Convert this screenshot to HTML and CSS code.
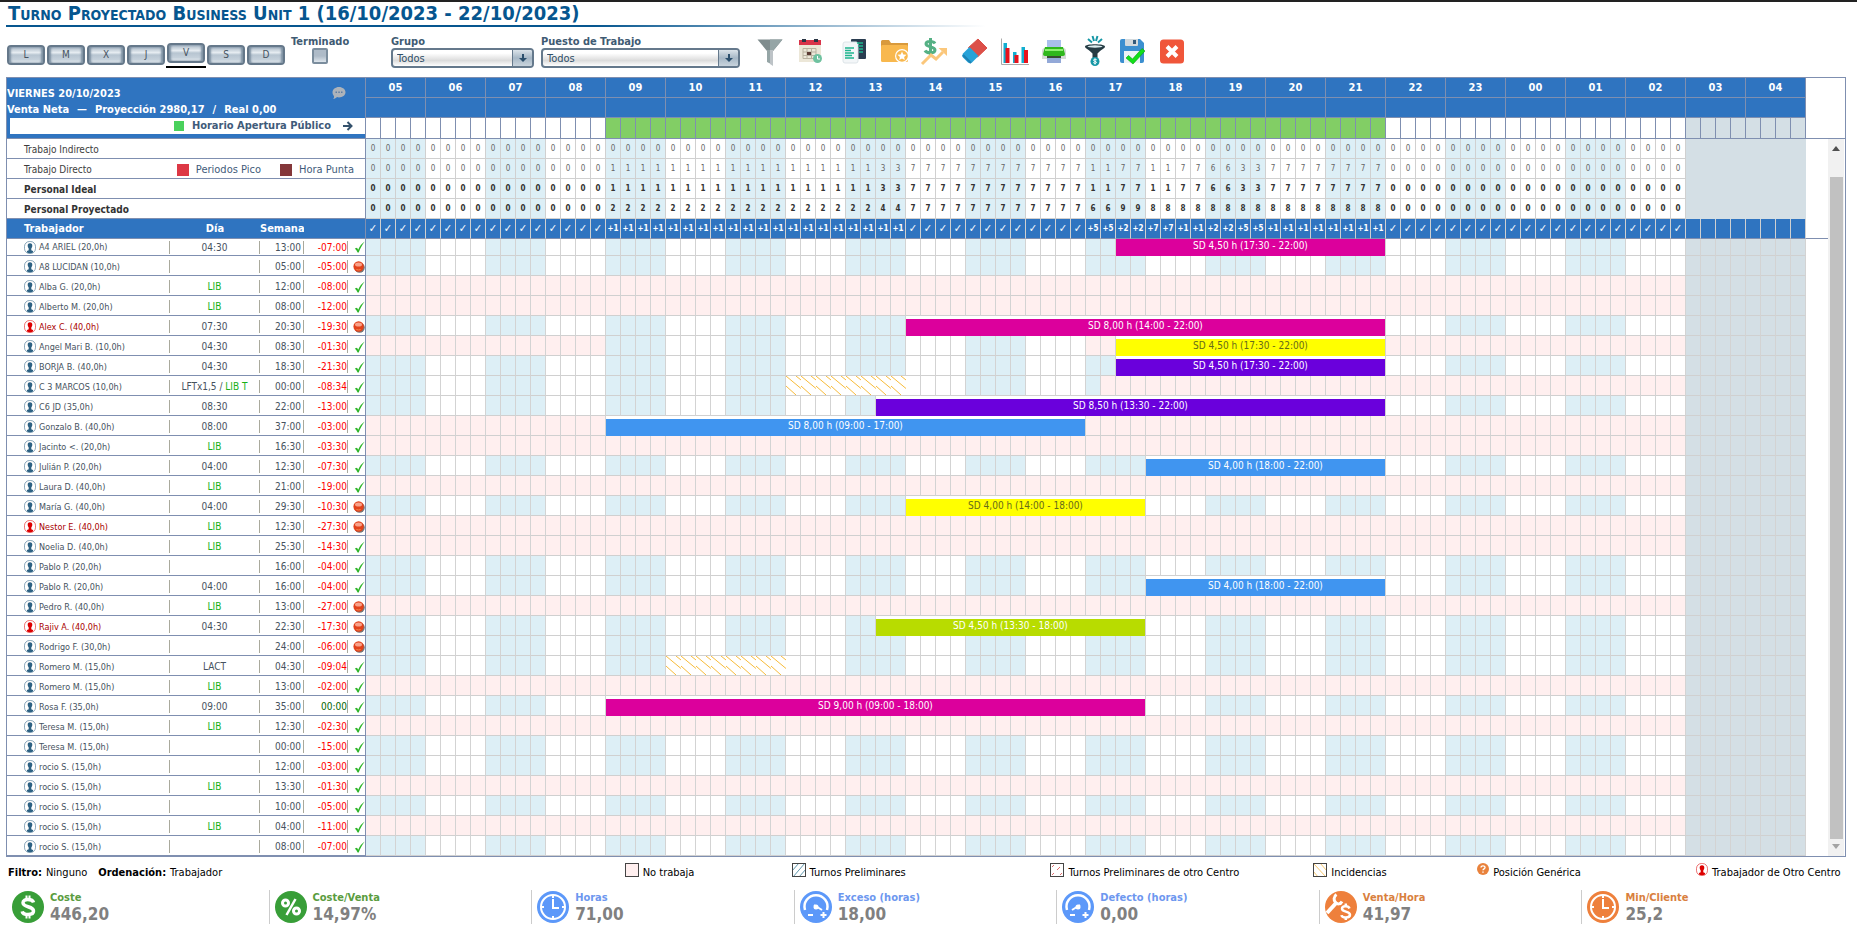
FILE: index.html
```html
<!DOCTYPE html>
<html lang="es">
<head>
<meta charset="utf-8">
<title>Turno Proyectado Business Unit 1</title>
<link rel="stylesheet" href="styles.css">
</head>
<body>
<svg class="defs" aria-hidden="true">
  <symbol id="person" viewBox="0 0 12 13"><rect x=".5" y=".5" width="11" height="12" rx="5" fill="#fff" stroke="currentColor" stroke-opacity=".55"/><path d="M6 2.200c1.700 0 2.400 1.100 2.300 2.700-.1 1.300-.7 2-1 2.600v1.700l1.700.9v1.400c-1.600 1.100-4.400 1.100-6 0v-1.400l1.700-.9V7.500c-.3-.6-.9-1.300-1-2.600C3.600 3.300 4.300 2.200 6 2.200z" fill="currentColor"/></symbol>
  <symbol id="tick" viewBox="0 0 11 12"><path d="M.8 7.500 3 6.800l1.200 2C5.600 5.500 7.700 2.600 10.700.6 8.300 4 6.200 7.500 4.700 11.500H3.600C2.900 9.900 2 8.500.8 7.500z" fill="#2fb52a"/></symbol>
  <symbol id="ball" viewBox="0 0 12 12"><circle cx="6.600" cy="6.600" r="5.200" fill="#777"/><circle cx="5.600" cy="5.500" r="5.200" fill="#e2421b"/><ellipse cx="5.500" cy="3.500" rx="3.500" ry="2" fill="#f9a28a"/><path d="M3 8c1.500 1 3.500 1 5 0-.5 1.800-4.500 1.800-5 0z" fill="#fdb26a"/></symbol>
  <symbol id="arrow" viewBox="0 0 10 10"><path d="M4 1h2v4h3L5 9 1 5h3z" fill="#2b4f6d"/></symbol>
</svg>

<h1 class="title">Turno Proyectado Business Unit 1 (16/10/2023 - 22/10/2023)</h1>

<div class="toolbar">
  <div class="days">
    <div class="day"><button type="button">L</button></div>
    <div class="day"><button type="button">M</button></div>
    <div class="day"><button type="button">X</button></div>
    <div class="day"><button type="button">J</button></div>
    <div class="day day-on"><button type="button">V</button></div>
    <div class="day"><button type="button">S</button></div>
    <div class="day"><button type="button">D</button></div>
  </div>
  <div class="field field-done">
    <label for="done">Terminado</label>
    <input class="check" type="checkbox" id="done">
  </div>
  <div class="field field-group">
    <label for="group">Grupo</label>
    <div class="combo"><select id="group"><option>Todos</option></select><span class="combo-arrow"><svg width="10" height="10"><use href="#arrow"/></svg></span></div>
  </div>
  <div class="field field-post">
    <label for="post">Puesto de Trabajo</label>
    <div class="combo"><select id="post"><option>Todos</option></select><span class="combo-arrow"><svg width="10" height="10"><use href="#arrow"/></svg></span></div>
  </div>
  <div class="tools">
    <button type="button" aria-label="Filtrar"><svg viewBox="0 0 28 28"><path d="M1.500 1.500h25L17 13H11z" fill="#7f8c8d"/><path d="M14 1.500h12.500L17 13h-3z" fill="#95a5a6"/><path d="M11 12h3v13.500l-3-1.500z" fill="#95a5a6"/><path d="M14 12h3v16l-3-2z" fill="#bdc3c7"/></svg></button>
    <button type="button" aria-label="Calendario"><svg viewBox="0 0 28 28"><path d="M3 7h22v17H3z" fill="#ece7d8"/><path d="M3 2h22v5H3z" fill="#d9344a"/><path d="M6 1h4v3H6zM18 1h4v3h-4z" fill="#2b3645"/><g fill="none" stroke="#b9b2a0"><path d="M7 10.500h13v10H7zM7 14h13M7 17.500h13M11 10.500v10M15.500 10.500v10"/></g><path d="M11 14h4v3h-4z" fill="#5b3a33"/><circle cx="21.500" cy="20.500" r="4.500" fill="#6fc2a0"/><path d="M21.500 18v3h2.500" stroke="#fff" fill="none"/></svg></button>
    <button type="button" aria-label="Copiar"><svg viewBox="-4 0 28 28"><rect x="11" y="1" width="15" height="20" rx="1" fill="#2a3d50"/><rect x="3" y="4" width="15" height="21" rx="2" fill="#f3f6f8" stroke="#dde4e8"/><g stroke="#1fb58f" stroke-width="1.500"><path d="M5 10h9M5 12.500h6M5 15h9M5 17.500h7M5 20h9M17 5h6M18 8h5M19 11h4M19 14h4"/></g></svg></button>
    <button type="button" aria-label="Favoritos"><svg viewBox="-5 0 28 28"><path d="M0 3.500q0-1.500 1.500-1.500H8l2 3h17v6H0z" fill="#d99a3c"/><rect y="7" width="27" height="17" rx="1.500" fill="#f8b84e"/><circle cx="21" cy="18" r="7" fill="#fff"/><circle cx="21" cy="18" r="5.800" fill="#f8b84e"/><path d="m21 13.500 1.300 2.900 3.200.3-2.400 2.200.7 3.100-2.800-1.600-2.800 1.600.7-3.100-2.400-2.200 3.200-.3z" fill="#fff"/></svg></button>
    <button type="button" aria-label="Ventas"><svg viewBox="-4 0 28 28"><path d="M15 5.500C13.500 3 6 2.800 6 6s9 2.300 9 6-8.500 3.500-10 .5M10.500 0v17" fill="none" stroke="#54b084" stroke-width="3"/><path d="m2 26 9-9 5 4 7-7" fill="none" stroke="#fbc77b" stroke-width="3"/><path d="M18.500 10H27v8z" fill="#fbc77b"/></svg></button>
    <button type="button" aria-label="Borrar"><svg viewBox="-5 0 28 28"><path d="m17 1 9 9-9.500 9-9-9.500z" fill="#dc4f48" stroke="#dc4f48" stroke-linejoin="round"/><path d="m8.500 9 9 9-6.500 6.500q-2 1.500-4 0l-5-5q-1.500-2 0-4z" fill="#27a2d8"/><path d="m2 17 8 8" stroke="#1c82b4" stroke-width="2"/></svg></button>
    <button type="button" aria-label="Gráfico"><svg viewBox="-5 0 28 28"><path d="M.5.500v26H28" fill="none" stroke="#aaa"/><path d="M2.500 5h3.500v20H2.500zM12 14h3.500v11H12zM20.500 9H24v16h-3.500z" fill="#12aed0"/><path d="M4.500 10h4v15h-4zM13.500 17h4v8h-4zM23 12h4v13h-4z" fill="#e8121c"/></svg></button>
    <button type="button" aria-label="Imprimir"><svg viewBox="-4 0 28 28"><path d="M7 2h14v10H7z" fill="#a9bfec"/><path d="M5 10h18q3 0 3 3v8H2v-8q0-3 3-3z" fill="#d5dad5"/><path d="M5 9h18l2 7q0 2-2 2H5q-2 0-2-2z" fill="#2fb81c"/><path d="M5 11h18v2H5z" fill="#8cf070"/><path d="M7 19h14v6H7z" fill="#93a9d8"/><path d="M7 18h14v2H7z" fill="#385031"/></svg></button>
    <button type="button" aria-label="Embudo de ventas"><svg viewBox="-5 0 28 28"><path d="M4 8.500C4 5.500 24 5.500 24 8.500c0 2-4 3-7.500 7V20h-5v-4.500C8 11.500 4 10.500 4 8.500z" fill="#253b43"/><ellipse cx="14" cy="8.500" rx="7.500" ry="1.200" fill="#dceef0"/><path d="m7 1 4 3.500M11.500-2l1.500 5M16.500-2 15 3M21 1l-4 3.500" stroke="#1697a6" stroke-width="2"/><circle cx="14" cy="23.500" r="4.500" fill="#1697a6"/><path d="M15.800 22c-1-1.300-3.600-.8-3.300.4.300 1 3 .7 3 2 0 1.200-2.500 1.200-3.300.1M14 20.500v6" fill="none" stroke="#fff"/></svg></button>
    <button type="button" aria-label="Guardar"><svg viewBox="-2 0 28 28"><path d="M2 3q0-2 2-2h18l4 4v18q0 2-2 2H4q-2 0-2-2z" fill="#3b8fd0"/><path d="M7 1h13v6q0 1-1 1H8q-1 0-1-1z" fill="#d2d9dd"/><path d="M15 2h3v4h-3z" fill="#33597a"/><path d="M6 13h16v12H6z" fill="#edf3f6"/><path d="m8 20 2.500-2.500 4 3.500L24 10.500l3 2.500L15 26z" fill="#12e01a" stroke="#0b9a12" stroke-width=".6"/></svg></button>
    <button type="button" aria-label="Cerrar"><svg viewBox="-2 0 28 28"><rect x="2" y="1.500" width="24" height="24" rx="3.500" fill="#f0563a"/><path d="m9 8.500 10 10M19 8.500l-10 10" stroke="#fff" stroke-width="4"/></svg></button>
  </div>
</div>

<main class="board">
  <table class="plan">
    <colgroup><col class="c-name"><col class="c-day"><col class="c-week"><col class="c-week"><col class="c-state"><col span="96"></colgroup>
    <thead id="head">
      <tr class="hours">
        <th class="summary" colspan="5" rowspan="3">
          <div class="summary-box">
            <div class="summary-day"><span>VIERNES 20/10/2023</span>
              <svg width="14" height="14" viewBox="0 0 14 14"><path d="M7 1c3.600 0 6.500 2.300 6.500 5.200S10.600 11.400 7 11.400c-.7 0-1.400-.1-2-.3-1 1-2 1.900-4 1.900.9-.9 1.200-1.700 1-2.800A5 5 0 0 1 .5 6.200C.5 3.300 3.400 1 7 1z" fill="#adb3ba"/><path d="M3.500 5.500h1.500v1.500H3.500zM6.300 5.500h1.500v1.500H6.300zM9 5.500h1.500v1.500H9z" fill="#5f7ea3"/></svg></div>
            <div class="summary-net"><span>Venta Neta</span><span>—</span><span>Proyección 2980,17</span><span>/</span><span>Real 0,00</span></div>
            <div class="summary-open"><i class="chip chip-open"></i>Horario Apertura Público
              <svg width="10" height="12" viewBox="0 0 10 12"><path d="M0 6h8M4.500 2l4 4-4 4" fill="none" stroke="#34516c" stroke-width="2"/></svg></div>
          </div>
        </th>
      </tr>
      <tr class="hours" id="subhours"></tr>
      <tr class="opening" id="opening"></tr>
    </thead>
    <tbody id="body"></tbody>
  </table>
  <div class="rail">
    <div class="rail-head"></div>
    <div class="rail-body">
      <div class="rail-gap"></div>
      <div class="scroll"><i class="up"></i><div class="thumb"></div><i class="down"></i></div>
    </div>
  </div>
</main>

<div class="legend">
  <div class="filter"><b>Filtro:</b> Ninguno <b class="order">Ordenación:</b> Trabajador</div>
  <div><i class="box box-off"></i>No trabaja</div>
  <div><svg class="box" viewBox="0 0 12 12"><path d="M-1 7 6-1M0 13 12-1M6 13l7-8" stroke="#5f97ad" fill="none"/></svg>Turnos Preliminares</div>
  <div><svg class="box" viewBox="0 0 12 12"><path d="M1 3l2-2M6 6l3-3M1 11l2-2M9 11l2-2" stroke="#e26a6a" fill="none"/></svg>Turnos Preliminares de otro Centro</div>
  <div><svg class="box" viewBox="0 0 12 12"><path d="M0 0 12 13M6-1l7 8M-1 7l6 7" stroke="#f6c66b" fill="none"/></svg>Incidencias</div>
  <div class="generic"><svg width="12" height="12" viewBox="0 0 12 12"><circle cx="6" cy="6" r="6" fill="#e9823c"/><path d="M4 4.600C4 2.300 8 2.300 8 4.500 8 6 6 5.800 6 7.300M6 8.400v1.400" fill="none" stroke="#fff" stroke-width="1.400"/></svg>Posición Genérica</div>
  <div class="other"><svg width="12" height="13"><use href="#person"/></svg>Trabajador de Otro Centro</div>
</div>

<div class="kpis">
  <div class="kpi green"><svg viewBox="0 0 32 32"><circle cx="16" cy="16" r="16"/><path d="M21.500 11.500C20.500 7.800 11 7.300 11 11.700c0 5 10.500 3 10.500 8.300 0 4.700-10.500 4.400-11.300.3" stroke-width="3.500" class="ln"/><path d="M14.500 4.500V9M17.500 4.500V9M14.500 23v4.500M17.500 23v4.500" stroke-width="2" class="ln"/></svg><div><span>Coste</span><b>446,20</b></div></div>
  <div class="kpi green"><svg viewBox="0 0 32 32"><circle cx="16" cy="16" r="16"/><circle cx="10.500" cy="12" r="3" stroke-width="3" class="ln"/><circle cx="21.500" cy="20" r="3" stroke-width="3" class="ln"/><path d="M20.500 8 11.500 24" stroke-width="2.500" class="ln"/></svg><div><span>Coste/Venta</span><b>14,97%</b></div></div>
  <div class="kpi blue"><svg viewBox="0 0 32 32"><circle cx="16" cy="16" r="16"/><circle cx="16" cy="16" r="12" stroke-width="2" class="ln"/><path d="M16 8v9h6M16 4v3M16 25v3M4 16h3M25 16h3" stroke-width="2" class="ln"/></svg><div><span>Horas</span><b>71,00</b></div></div>
  <div class="kpi blue"><svg viewBox="0 0 32 32"><circle cx="16" cy="16" r="16"/><path d="M5 19a11.500 11.500 0 1 1 22 0" stroke-width="2.500" class="ln"/><path d="m14 14 8 5M8 24h5M20.500 24h6M23.500 21v6" stroke-width="2" class="ln"/><circle cx="16" cy="16" r="2.500" fill="#fff"/></svg><div><span>Exceso (horas)</span><b>18,00</b></div></div>
  <div class="kpi blue"><svg viewBox="0 0 32 32"><circle cx="16" cy="16" r="16"/><path d="M5 19a11.500 11.500 0 1 1 22 0" stroke-width="2.500" class="ln"/><path d="m18 14-8 5M8 24h5M20.500 24h6M23.500 21v6" stroke-width="2" class="ln"/><circle cx="16" cy="16" r="2.500" fill="#fff"/></svg><div><span>Defecto (horas)</span><b>0,00</b></div></div>
  <div class="kpi orange"><svg viewBox="0 0 32 32"><circle cx="16" cy="16" r="16"/><path d="M2 22 12 11" stroke-width="4" class="ln"/><path d="M11.500 3.500c-3 2-3 6-1 8s5 2 6.500-1" stroke-width="3" class="ln"/><path d="M24.500 17.500c-1-3-7.500-3-7.500.3 0 3.700 8 2 8 6 0 3.500-8 3.500-8.500.3" stroke-width="2.500" class="ln"/><path d="M20.800 12.500v3M20.800 26v3" stroke-width="2.500" class="ln"/></svg><div><span>Venta/Hora</span><b>41,97</b></div></div>
  <div class="kpi orange"><svg viewBox="0 0 32 32"><circle cx="16" cy="16" r="16"/><circle cx="16" cy="16" r="12" stroke-width="2" class="ln"/><path d="M16 8v9h6M16 4v3M16 25v3M4 16h3M25 16h3" stroke-width="2" class="ln"/></svg><div><span>Min/Cliente</span><b>25,2</b></div></div>
</div>
<script src="plan.js"></script>
</body>
</html>
```

FILE: styles.css
```css
* { box-sizing: border-box; }
body {
  margin: 0;
  padding: 0 11px 0 6px;
  border-top: 2px solid #222;
  background: #fff;
  color: #3f5b73;
  font-family: "DejaVu Sans Condensed", "DejaVu Sans", Verdana, sans-serif;
  font-size: 10px;
}
.defs { position: absolute; width: 0; height: 0; }
button { font: inherit; padding: 0; border: 0; background: none; }

.title {
  margin: 0;
  padding: 0 0 0 2px;
  height: 25px;
  font-size: 20px;
  line-height: 22px;
  font-variant: small-caps;
  color: #06568f;
  white-space: nowrap;
  background: linear-gradient(90deg, #06568f 60%, #fff) left bottom / 980px 2px no-repeat;
}

/* Toolbar */
.toolbar { display: flex; align-items: flex-start; height: 50px; padding-top: 9px; }
.days { display: flex; width: 285px; padding-top: 7px; }
.day { width: 40px; height: 25px; padding: 2px 1px 0; }
.day-on { padding-top: 0; border-bottom: 2px solid #000; }
.day button {
  display: block;
  width: 38px;
  height: 20px;
  border: 2px solid #65788a;
  border-radius: 4px;
  background: linear-gradient(#a9b8c6, #e6ecf1 35%, #b7c5d1 50%, #c5d1db 80%, #eef3f6);
  box-shadow: inset 2px 0 2px #7f92a3, inset -2px 0 2px #7f92a3;
  color: #45525e;
  line-height: 14px;
}
.field { display: flex; flex-direction: column; }
.field label { font-size: 11px; line-height: 12px; font-weight: bold; white-space: nowrap; }
.field-done { width: 100px; align-items: flex-start; }
.field-done .check {
  appearance: none;
  width: 16px;
  height: 16px;
  margin: 0 0 0 21px;
  border: 2px solid #7b8d9d;
  border-radius: 2px;
  background: linear-gradient(#aebbc8 50%, #dde5ec);
}
.field-group { width: 143px; margin-right: 7px; }
.field-post { width: 199px; margin-right: 16px; }
.combo {
  display: flex;
  height: 20px;
  border: 2px solid #65798c;
  border-radius: 4px;
  background: linear-gradient(#fff 20%, #dcdcdc 65%, #fff);
  overflow: hidden;
}
.combo select {
  flex: 1;
  min-width: 0;
  appearance: none;
  border: 0;
  padding: 0 4px;
  background: none;
  color: #2f4f68;
  font: inherit;
  font-size: 11px;
}
.combo-arrow {
  display: flex;
  align-items: center;
  justify-content: center;
  width: 20px;
  border-left: 1px solid #65798c;
  background: linear-gradient(#dbe3ea, #a6b7c6 50%, #c9d4dd);
}
.tools { display: flex; gap: 12px; padding-top: 2px; }
.tools svg { display: block; width: 28px; height: 28px; overflow: visible; }

/* Planning board */
.board {
  display: flex;
  border: 1px solid #7f8fb0;
}
.plan {
  flex: 1;
  width: 100%;
  min-width: 0;
  table-layout: fixed;
  border-collapse: separate;
  border-spacing: 0;
}
.c-name { width: 163px; }
.c-day { width: 90px; }
.c-week { width: 44px; }
.c-state { width: 18px; }
.plan td, .plan th { padding: 0; font-weight: normal; overflow: hidden; }
.hours th {
  height: 20px;
  border-right: 1px solid #7f8fb0;
  border-bottom: 1px solid #7f8fb0;
  background: #2f74c0;
  color: #fff;
  font-size: 11px;
  font-weight: bold;
  line-height: 19px;
}
.hours .summary { text-align: left; vertical-align: top; }
.summary-box { height: 60px; padding-top: 6px; }
.summary-day { display: flex; align-items: center; justify-content: space-between; height: 18px; padding-right: 19px; }
.summary-net { display: flex; gap: 8px; height: 16px; line-height: 16px; white-space: nowrap; }
.summary-open {
  display: flex;
  align-items: center;
  justify-content: flex-end;
  gap: 8px;
  height: 16px;
  margin-left: 3px;
  padding-right: 12px;
  background: #fff;
  color: #3f5b7a;
  line-height: 16px;
}
.summary-open svg { margin-left: 4px; }
.chip { width: 12px; height: 12px; }
.chip-open { width: 10px; height: 10px; background: #4ad15c; }
.chip-peak { background: #dd3845; }
.chip-rush { background: #84373a; }
.opening td { height: 21px; border-right: 1px solid #7f8fb0; border-bottom: 1px solid #7f8fb0; }
.opening .open { background: #82ce65; }
.plan .even { background: #ddeff6; }
.plan .shut { background: #d4dfe5; }
.plan .off { background: #ffefef; }

.count .lead {
  height: 20px;
  padding-left: 17px;
  border-right: 1px solid #7f8fb0;
  border-bottom: 1px solid #7f8fb0;
  color: #3d3d3d;
  text-align: left;
}
.lead-box { display: flex; align-items: center; height: 19px; padding-top: 2px; }
.lead-box .keys { display: flex; align-items: center; gap: 7px; margin-left: auto; padding-right: 11px; color: #3f5b7a; font-size: 11px; }
.keys .chip-rush { margin-left: 12px; }
.count td {
  height: 20px;
  border-right: 1px solid #d0d0d0;
  border-bottom: 1px solid #d0d0d0;
  color: #666;
  font-size: 8px;
  line-height: 18px;
  text-align: center;
}
.count td.shut { border-color: #d4dfe5; }
.strong .lead, .strong td { font-weight: bold; color: #333; }

.delta th, .delta td {
  height: 20px;
  border-bottom: 1px solid #7f8fb0;
  background: #2f74c0;
  color: #fff;
  text-align: center;
  line-height: 19px;
}
.delta td { border-right: 1px solid #d0d0d0; font-size: 8px; font-weight: bold; white-space: nowrap; }
.delta td.ok { font-size: 11px; }
.delta th { font-size: 11px; font-weight: bold; }
.delta .first { padding-left: 17px; text-align: left; }
.delta .week { text-align: left; }
.delta .last { border-right: 1px solid #7f8fb0; }

.worker td { height: 20px; border-right: 1px solid #d3d3d3; border-bottom: 1px solid #d0d0d0; }
.worker .info { border-right: 0; border-bottom: 1px solid #7f8fb0; color: #46525e; white-space: nowrap; }
.worker .info.state { border-right: 1px solid #7f8fb0; }
.info div {
  display: flex;
  align-items: center;
  height: 13px;
  margin-top: 2px;
  border-right: 1px solid #a9a99c;
}
.info.who div { gap: 3px; padding-left: 17px; font-size: 9px; }
.info.who svg { flex: none; color: #2d6183; }
.info.day div { justify-content: center; }
.info.num div { justify-content: flex-end; padding-right: 2px; }
.info.num.minus div { padding-right: 0; color: #f00; }
.info.num.zero div { padding-right: 0; color: #060; }
.info.state div { justify-content: flex-end; border: 0; }
.worker .foreign { color: #a80000; }
.foreign svg.person { color: #d00; }
.lib { color: #17b017; }
.worker td.shift { padding-top: 3px; border-bottom: 0; vertical-align: top; }
.shift div {
  height: 17px;
  color: #fff;
  font-size: 10px;
  line-height: 14px;
  text-align: center;
  white-space: nowrap;
}
.worker.cut td { height: 17px; }
.worker.cut td.shift { padding-top: 0; }
.cut .info div { margin-top: 0; }
.magenta { background: #dc009c; }
.yellow { background: #ff0; }
.shift .yellow { color: #666a1c; }
.violet { background: #6a00dc; }
.sky { background: #4095f0; }
.lime { background: #b8dc00; }
.worker td.issue { border-right: 0; }
.issue svg { display: block; width: 100%; height: 19px; }

.rail { display: flex; flex: none; flex-direction: column; width: 39px; }
.rail-head { height: 61px; border-bottom: 1px solid #7f8fb0; }
.rail-body { display: flex; flex: 1; }
.rail-gap { width: 22px; height: 100px; border-bottom: 1px solid #7f8fb0; }
.scroll {
  display: flex;
  flex-direction: column;
  align-items: center;
  width: 16px;
  padding: 7px 0;
  background: #f1f1f1;
}
.thumb { width: 13px; flex: 1; margin: 26px 0 5px; background: #c1c1c1; }
.up, .down { border: 4px solid transparent; }
.up { border-top: 0; border-bottom: 5px solid #505050; }
.down { border-bottom: 0; border-top: 5px solid #a3a3a3; }

/* Legend */
.legend {
  display: grid;
  grid-template-columns: 617fr 167fr 259fr 263fr 164fr 219fr 150fr;
  height: 33px;
  padding: 6px 0 0 2px;
  color: #000;
  font-size: 11px;
}
.legend > div { display: flex; align-items: flex-start; gap: 4px; min-width: 0; line-height: 20px; white-space: nowrap; }
.legend .order { margin-left: 7px; }
.box { flex: none; width: 14px; height: 14px; border: 1px solid #444; }
.box-off { background: #ffefef; }
.other svg { color: #d00; }
.legend svg { flex: none; }

/* Indicators */
.kpis { display: grid; grid-template-columns: repeat(7, 1fr); height: 34px; margin-right: 2px; }
.kpi { display: flex; gap: 6px; padding: 1px 0 0 5px; border-left: 1px solid #ccc; }
.kpi:first-child { border-left-color: transparent; }
.kpi svg { flex: none; width: 32px; height: 32px; fill: currentColor; }
.kpi .ln { fill: none; stroke: #fff; }
.kpi span, .kpi b { display: block; }
.kpi span { font-size: 11px; font-weight: bold; line-height: 14px; }
.kpi b { color: #808080; font-size: 17px; line-height: 18px; }
.green { color: #389e38; }
.green span { color: #5a9c3e; }
.blue { color: #5c98f9; }
.blue span { color: #6d97ef; }
.orange { color: #ee803c; }
.orange span { color: #d9803e; }
```

FILE: plan.js
```js
const HOURS = ["05","06","07","08","09","10","11","12","13","14","15","16","17","18","19","20","21","22","23","00","01","02","03","04"];
const CELLS = HOURS.length * 4;
const CLOSED_FROM = 88;

// Expands [[value, times], ...] into a flat list of quarter-hour values.
const expand = runs => runs.flatMap(([v, n]) => Array(n).fill(v));

const el = (tag, cls, html) => {
  const node = document.createElement(tag);
  if (cls) node.className = cls;
  if (html !== undefined) node.innerHTML = html;
  return node;
};
const zone = i => i >= CLOSED_FROM ? "shut" : Math.floor(i / 4) % 2 ? "" : "even";

const head = document.querySelector(".hours");
const sub = document.getElementById("subhours");
HOURS.forEach(h => {
  const th = el("th", "", h);
  th.colSpan = 4;
  head.append(th);
  const empty = el("th");
  empty.colSpan = 4;
  sub.append(empty);
});
const opening = document.getElementById("opening");
for (let i = 0; i < CELLS; i++) {
  opening.append(el("td", i >= CLOSED_FROM ? "shut" : i >= 16 && i < 68 ? "open" : ""));
}

const body = document.getElementById("body");
const direct = expand([[0,16],[1,18],[3,2],[7,12],[1,2],[7,2],[1,2],[7,2],[6,2],[3,2],[7,8],[0,20]]);
const planned = expand([[0,16],[2,18],[4,2],[7,12],[6,2],[9,2],[8,16],[0,20]]);
const keys = '<span class="keys"><i class="chip chip-peak"></i>Periodos Pico<i class="chip chip-rush"></i>Hora Punta</span>';
[
  ["Trabajo Indirecto", "", expand([[0, 88]]), ""],
  ["Trabajo Directo", keys, direct, ""],
  ["Personal Ideal", "", direct, "strong"],
  ["Personal Proyectado", "", planned, "strong"]
].forEach(([name, extra, values, cls]) => {
  const tr = el("tr", "count " + cls);
  const lead = el("th", "lead", `<div class="lead-box">${name}${extra}</div>`);
  lead.colSpan = 5;
  tr.append(lead);
  for (let i = 0; i < CELLS; i++) tr.append(el("td", zone(i), values[i] ?? ""));
  body.append(tr);
});

const delta = el("tr", "delta", '<th class="first">Trabajador</th><th>Día</th><th class="week">Semana</th><th></th><th class="last"></th>');
expand([["✓",16],["+1",20],["✓",12],["+5",2],["+2",2],["+7",2],["+1",2],["+2",2],["+5",2],["+1",8],["✓",20],["",8]])
  .forEach(v => delta.append(el("td", v === "✓" ? "ok" : "", v)));
body.append(delta);

const LIB = '<span class="lib">LIB</span>';
const ALL = [[0, 88]];
// name, day, week, difference, red state, other centre, [start, end, colour, text], off ranges, issue range
const workers = [
  ["A4 ARIEL (20,0h)", "04:30", "13:00", "-07:00", 0, 0, [50, 68, "magenta", "SD 4,50 h (17:30 - 22:00)"]],
  ["A8 LUCIDAN (10,0h)", "", "05:00", "-05:00", 1, 0],
  ["Alba G. (20,0h)", LIB, "12:00", "-08:00", 0, 0, null, ALL],
  ["Alberto M. (20,0h)", LIB, "08:00", "-12:00", 0, 0, null, ALL],
  ["Alex C. (40,0h)", "07:30", "20:30", "-19:30", 1, 1, [36, 68, "magenta", "SD 8,00 h (14:00 - 22:00)"]],
  ["Angel Mari B. (10,0h)", "04:30", "08:30", "-01:30", 0, 0, [50, 68, "yellow", "SD 4,50 h (17:30 - 22:00)"], [[0, 16], [48, 88]]],
  ["BORJA B. (40,0h)", "04:30", "18:30", "-21:30", 0, 0, [50, 68, "violet", "SD 4,50 h (17:30 - 22:00)"]],
  ["C 3 MARCOS (10,0h)", 'LFTx1,5 /&nbsp;<span class="lib">LIB T</span>', "00:00", "-08:34", 0, 0, null, [[49, 88]], [28, 36]],
  ["C6 JD (35,0h)", "08:30", "22:00", "-13:00", 0, 0, [34, 68, "violet", "SD 8,50 h (13:30 - 22:00)"]],
  ["Gonzalo B. (40,0h)", "08:00", "37:00", "-03:00", 0, 0, [16, 48, "sky", "SD 8,00 h (09:00 - 17:00)"], ALL],
  ["Jacinto &lt;. (20,0h)", LIB, "16:30", "-03:30", 0, 0, null, ALL],
  ["Julián P. (20,0h)", "04:00", "12:30", "-07:30", 0, 0, [52, 68, "sky", "SD 4,00 h (18:00 - 22:00)"]],
  ["Laura D. (40,0h)", LIB, "21:00", "-19:00", 0, 0, null, ALL],
  ["María G. (40,0h)", "04:00", "29:30", "-10:30", 1, 0, [36, 52, "yellow", "SD 4,00 h (14:00 - 18:00)"]],
  ["Nestor E. (40,0h)", LIB, "12:30", "-27:30", 1, 1, null, ALL],
  ["Noelia D. (40,0h)", LIB, "25:30", "-14:30", 0, 0, null, ALL],
  ["Pablo P. (20,0h)", "", "16:00", "-04:00", 0, 0],
  ["Pablo R. (20,0h)", "04:00", "16:00", "-04:00", 0, 0, [52, 68, "sky", "SD 4,00 h (18:00 - 22:00)"]],
  ["Pedro R. (40,0h)", LIB, "13:00", "-27:00", 1, 0, null, ALL],
  ["Rajiv A. (40,0h)", "04:30", "22:30", "-17:30", 1, 1, [34, 52, "lime", "SD 4,50 h (13:30 - 18:00)"]],
  ["Rodrigo F. (30,0h)", "", "24:00", "-06:00", 1, 0],
  ["Romero M. (15,0h)", "LACT", "04:30", "-09:04", 0, 0, null, [], [20, 28]],
  ["Romero M. (15,0h)", LIB, "13:00", "-02:00", 0, 0, null, ALL],
  ["Rosa F. (35,0h)", "09:00", "35:00", "00:00", 0, 0, [16, 52, "magenta", "SD 9,00 h (09:00 - 18:00)"]],
  ["Teresa M. (15,0h)", LIB, "12:30", "-02:30", 0, 0, null, ALL],
  ["Teresa M. (15,0h)", "", "00:00", "-15:00", 0, 0],
  ["rocio S. (15,0h)", "", "12:00", "-03:00", 0, 0],
  ["rocio S. (15,0h)", LIB, "13:30", "-01:30", 0, 0, null, ALL],
  ["rocio S. (15,0h)", "", "10:00", "-05:00", 0, 0],
  ["rocio S. (15,0h)", LIB, "04:00", "-11:00", 0, 0, null, ALL],
  ["rocio S. (15,0h)", "", "08:00", "-07:00", 0, 0]
];

workers.forEach(([name, day, week, diff, alert, foreign, shift, off = [], issue], n) => {
  const tr = el("tr", n ? "worker" : "worker cut");
  const box = (cls, html) => tr.append(el("td", "info " + cls, `<div>${html}</div>`));
  box(foreign ? "who foreign" : "who", `<svg class="person" width="12" height="13"><use href="#person"/></svg>${name}`);
  box("day", day);
  box("num", week);
  box("num " + (diff[0] === "-" ? "minus" : "zero"), diff);
  box("state", alert ? '<svg width="12" height="12"><use href="#ball"/></svg>' : '<svg width="11" height="12"><use href="#tick"/></svg>');
  for (let i = 0; i < CELLS; i++) {
    if (shift && i === shift[0]) {
      const td = el("td", "shift", `<div class="${shift[2]}">${shift[3]}</div>`);
      td.colSpan = shift[1] - shift[0];
      tr.append(td);
      i = shift[1] - 1;
    } else if (issue && i >= issue[0] && i < issue[1]) {
      tr.append(el("td", "issue", '<svg viewBox="0 0 15 19" preserveAspectRatio="none"><path d="M0 0l15 12.500M10 0l5 4M0 10l10 9" fill="none" stroke="#f7bb3a"/></svg>'));
    } else {
      tr.append(el("td", off.some(([a, b]) => i >= a && i < b) ? "off" : zone(i)));
    }
  }
  body.append(tr);
});
```
